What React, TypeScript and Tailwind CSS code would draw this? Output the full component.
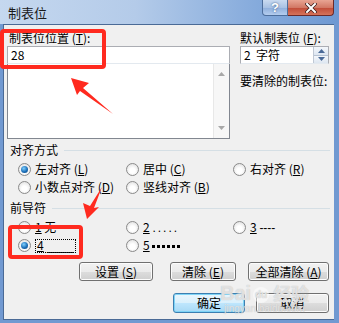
import React from 'react';

const font = "font-['SimSun','Noto_Sans_CJK_SC','Noto_Sans',sans-serif]";

const Radio = ({ checked = false, label }: { checked?: boolean; label: React.ReactNode }) => (
  <div className="flex items-center h-[14px]">
    <span className="w-[13px] h-[13px] rounded-full border border-[#8a8a8a] bg-[radial-gradient(circle_at_50%_60%,#ffffff_30%,#d8d8d8_100%)] flex items-center justify-center shrink-0">
      {checked && (
        <span className="w-[7px] h-[7px] rounded-full bg-[radial-gradient(circle_at_40%_35%,#7fd0ff_0%,#1c6fb8_55%,#0b3f78_100%)]" />
      )}
    </span>
    <span className="ml-[4px] text-[12px] leading-[14px] whitespace-nowrap">{label}</span>
  </div>
);

const Btn = ({ children, def = false, w }: { children: React.ReactNode; def?: boolean; w: string }) => (
  <div
    className={`${w} h-full rounded-[3px] border flex items-center justify-center text-[12px] leading-[14px] ${
      def
        ? 'border-[#3c7fb1] shadow-[inset_0_0_0_1px_#7fd4f6] bg-[linear-gradient(#eaf6fd_0%,#d9f0fc_50%,#bee6fd_51%,#a7d9f5_100%)]'
        : 'border-[#707070] shadow-[inset_0_0_0_1px_#fcfcfc] bg-[linear-gradient(#f2f2f2_0%,#ebebeb_50%,#dddddd_51%,#cfcfcf_100%)]'
    }`}
  >
    {children}
  </div>
);

const GroupHeader = ({ title }: { title: string }) => (
  <div className="flex items-center h-[14px] pl-[6px] pr-[4px]">
    <span className="text-[12px] leading-[14px]">{title}</span>
    <div className="flex-1 ml-[6px] h-px bg-[#d5dfe5]" />
  </div>
);

export default function App() {
  return (
    <div className={`relative w-[339px] h-[323px] overflow-hidden bg-[#7199d1] text-black ${font}`}>
      {/* Title bar */}
      <div className="flex items-start h-[24px] bg-[linear-gradient(90deg,#c5d8ef_0%,#b4cbe9_40%,#86abdc_75%,#6e98d2_100%)]">
        <span className="pl-[8px] pt-[5px] text-[13px] leading-[15px] text-[#1a1a1a]">制表位</span>
        <div className="flex-1" />
        <div className="flex mr-[5px]">
          <div className="w-[26px] h-[16px] rounded-bl-[4px] border border-t-0 border-[#4d6e9c] bg-[linear-gradient(#c9daf0_0%,#a9c2e4_50%,#8eaedb_51%,#b4cdef_100%)] flex items-center justify-center text-white text-[13px] font-bold leading-none font-['Liberation_Sans',sans-serif] [text-shadow:0_0_2px_#2b4b7a]">
            ?
          </div>
          <div className="w-[46px] h-[16px] rounded-br-[4px] border border-t-0 border-l-0 border-[#6b2a2a] bg-[linear-gradient(#e8a493_0%,#d27865_50%,#c04a36_51%,#d5735b_100%)] flex items-center justify-center">
            <svg width="12" height="10" viewBox="0 0 12 10">
              <path d="M2 1 L10 9 M10 1 L2 9" stroke="#3a1a1a" strokeWidth="3.4" strokeLinecap="square" />
              <path d="M2 1 L10 9 M10 1 L2 9" stroke="#ffffff" strokeWidth="2" strokeLinecap="square" />
            </svg>
          </div>
        </div>
      </div>

      {/* Client area */}
      <div className="ml-[3px] mr-[5px] h-[296px] bg-[#f0f0f0] border-t border-l border-b border-[#4a6a96] flex flex-col">
        <div className="flex mt-[5px]">
          <div className="ml-[3px] w-[223px] flex flex-col">
            <div className="h-[16px] pl-[2px] text-[12px] leading-[16px] whitespace-pre">制表位位置 (<u>T</u>):</div>
            <div className="h-[18px] bg-white border border-[#abadb3] border-b-[#e3e9ef] flex items-center pl-[3px] text-[12px] leading-[14px]">
              28
            </div>
            <div className="h-[75px] bg-white border border-[#828790] border-t-0 flex">
              <div className="flex-1" />
              <div className="w-[16px] bg-[#f7f7f7] border-l border-[#e8e8e8] flex flex-col items-center justify-between py-[8px]">
                <svg width="7" height="4" viewBox="0 0 7 4"><path d="M0 4 L3.5 0 L7 4 Z" fill="#a8a8a8" /></svg>
                <svg width="7" height="4" viewBox="0 0 7 4"><path d="M0 0 L3.5 4 L7 0 Z" fill="#a8a8a8" /></svg>
              </div>
            </div>
          </div>
          <div className="ml-[10px] w-[89px] flex flex-col">
            <div className="h-[16px] text-[12px] leading-[16px] whitespace-pre">默认制表位 (<u>F</u>):</div>
            <div className="h-[18px] bg-white border border-[#abadb3] border-b-[#e3e9ef] flex items-center">
              <span className="flex-1 pl-[3px] text-[12px] leading-[14px] whitespace-pre">2  字符</span>
              <div className="w-[15px] h-full flex flex-col border-l border-[#c0c8d4]">
                <div className="flex-1 bg-[linear-gradient(#f4f7fb,#dde6f1)] border-b border-[#b6c3d3] flex items-center justify-center">
                  <svg width="7" height="4" viewBox="0 0 7 4"><path d="M0 4 L3.5 0 L7 4 Z" fill="#4a6a98" /></svg>
                </div>
                <div className="flex-1 bg-[linear-gradient(#f4f7fb,#dde6f1)] flex items-center justify-center">
                  <svg width="7" height="4" viewBox="0 0 7 4"><path d="M0 0 L3.5 4 L7 0 Z" fill="#4a6a98" /></svg>
                </div>
              </div>
            </div>
            <div className="mt-[9px] h-[16px] text-[12px] leading-[16px] whitespace-nowrap">要清除的制表位:</div>
          </div>
        </div>

        <div className="mt-[4px]">
          <GroupHeader title="对齐方式" />
        </div>
        <div className="mt-[5px] grid grid-cols-[108px_107px_1fr] pl-[14px]">
          <Radio checked label={<>左对齐 (<u>L</u>)</>} />
          <Radio label={<>居中 (<u>C</u>)</>} />
          <Radio label={<>右对齐 (<u>R</u>)</>} />
        </div>
        <div className="mt-[4px] grid grid-cols-[108px_107px_1fr] pl-[14px]">
          <Radio label={<>小数点对齐 (<u>D</u>)</>} />
          <Radio label={<>竖线对齐 (<u>B</u>)</>} />
        </div>

        <div className="mt-[7px]">
          <GroupHeader title="前导符" />
        </div>
        <div className="mt-[5px] grid grid-cols-[108px_107px_1fr] pl-[14px]">
          <Radio label={<><u>1</u> 无</>} />
          <Radio label={<><u>2</u> <span className="font-['Liberation_Sans',sans-serif] tracking-[2px]">.....</span></>} />
          <Radio label={<><u>3</u> <span className="font-['Liberation_Sans',sans-serif]">----</span></>} />
        </div>
        <div className="mt-[4px] grid grid-cols-[108px_107px_1fr] pl-[14px]">
          <Radio
            checked
            label={
              <span className="inline-block border border-dotted border-black px-[1px] leading-[12px] font-['Liberation_Sans',sans-serif]">
                <u>4</u> ____
              </span>
            }
          />
          <Radio
            label={
              <>
                <u>5</u>{' '}
                <span className="inline-flex gap-[2px] align-middle">
                  {[0, 1, 2, 3, 4, 5].map(i => (
                    <span key={i} className="w-[3px] h-[3px] bg-black" />
                  ))}
                </span>
              </>
            }
          />
        </div>

        <div className="mt-[10px] h-[19px] flex pl-[75px]">
          <Btn w="w-[74px]"><span className="whitespace-pre">设置 (<u>S</u>)</span></Btn>
          <div className="w-[17px]" />
          <Btn w="w-[66px]"><span className="whitespace-pre">清除 (<u>E</u>)</span></Btn>
          <div className="w-[12px]" />
          <Btn w="w-[81px]"><span className="whitespace-pre">全部清除 (<u>A</u>)</span></Btn>
        </div>
        <div className="mt-[12px] h-[20px] flex pl-[169px]">
          <Btn def w="w-[72px]">确定</Btn>
          <div className="w-[11px]" />
          <Btn w="w-[73px]">取消</Btn>
        </div>
      </div>

      {/* Watermark */}
      <div className="absolute left-[220px] top-[283px] flex flex-col items-center text-white/60 [text-shadow:0_0_1px_#b0b0b0] pointer-events-none">
        <div className="flex items-end font-['Liberation_Sans',sans-serif] font-bold text-[20px] leading-[20px]">
          <span>Bai</span>
          <span className="mx-[2px] w-[16px] h-[16px] rounded-full bg-white/50 text-[10px] leading-[16px] text-center">du</span>
          <span className={`ml-[2px] text-[18px] ${font}`}>经验</span>
        </div>
        <div className="font-['Liberation_Sans',sans-serif] text-[10px] leading-[11px]">jingyan.baidu.com</div>
      </div>

      {/* Red annotations */}
      <div className="absolute left-0 top-[29px] w-[106px] h-[40px] border-[4px] border-[#ff2a1f] rounded-[4px] pointer-events-none" />
      <div className="absolute left-[8px] top-[225px] w-[75px] h-[34px] border-[4px] border-[#ff2a1f] rounded-[4px] pointer-events-none" />
      <svg className="absolute left-0 top-0 pointer-events-none" width="339" height="323" viewBox="0 0 339 323">
        <polygon points="71,78 89,83 83,88 113,114 80,91 77,95" fill="#ff2a1f" />
        <polygon points="87,219 83,203 90,206 102,187 94,208 99,207" fill="#ff2a1f" />
      </svg>
    </div>
  );
}
